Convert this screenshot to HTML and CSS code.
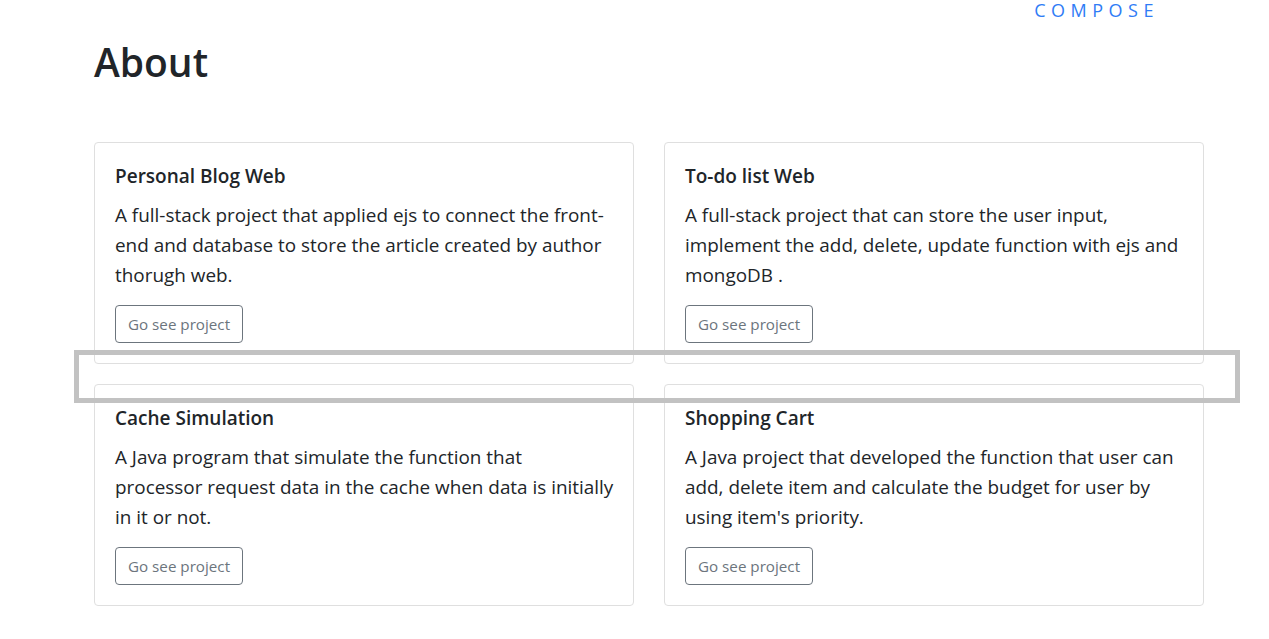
FILE: index.html
```html
<!DOCTYPE html>
<html>
<head>
<meta charset="utf-8">
<link rel="stylesheet" href="styles.css">
</head>
<body>
<header class="topbar">
  <a class="nav-link" href="#">COMPOSE</a>
</header>
<main class="container">
  <h1 class="page-title">About</h1>
  <div class="grid">
    <div class="card">
      <h5 class="card-title">Personal Blog Web</h5>
      <p class="card-text">A full-stack project that applied ejs to connect the front-<br>end and database to store the article created by author<br>thorugh web.</p>
      <a class="btn" href="#">Go see project</a>
    </div>
    <div class="card">
      <h5 class="card-title">To-do list Web</h5>
      <p class="card-text">A full-stack project that can store the user input,<br>implement the add, delete, update function with ejs and<br>mongoDB .</p>
      <a class="btn" href="#">Go see project</a>
    </div>
    <div class="card">
      <h5 class="card-title">Cache Simulation</h5>
      <p class="card-text">A Java program that simulate the function that<br>processor request data in the cache when data is initially<br>in it or not.</p>
      <a class="btn" href="#">Go see project</a>
    </div>
    <div class="card">
      <h5 class="card-title">Shopping Cart</h5>
      <p class="card-text">A Java project that developed the function that user can<br>add, delete item and calculate the budget for user by<br>using item's priority.</p>
      <a class="btn" href="#">Go see project</a>
    </div>
  </div>
</main>
<div class="highlight"></div>
</body>
</html>
```

FILE: styles.css
```css
* { box-sizing: border-box; }
html, body {
  margin: 0;
  padding: 0;
  background: #ffffff;
  font-family: "Open Sans", "Noto Sans", "DejaVu Sans", sans-serif;
  color: #212529;
}
.topbar {
  height: 22px;
  display: flex;
  justify-content: flex-end;
  padding-right: 110px;
  padding-top: 1px;
}
.nav-link {
  color: #2f7cf6;
  text-decoration: none;
  font-size: 18px;
  letter-spacing: 5.5px;
  line-height: 18px;
}
.container {
  width: 1110px;
  margin-left: 94px;
}
.page-title {
  margin: 16px 0 0 0;
  font-size: 39px;
  font-weight: 600;
  line-height: 48px;
  color: #212529;
}
.grid {
  margin-top: 56px;
  display: grid;
  grid-template-columns: 540px 540px;
  column-gap: 30px;
  row-gap: 20px;
}
.card {
  border: 1px solid #dfdfdf;
  border-radius: 4px;
  padding: 21px 20px 20px 20px;
  height: 222px;
}
.card-title {
  margin: 0 0 12px 0;
  font-size: 19px;
  font-weight: 600;
  line-height: 24px;
}
.card-text {
  margin: 0 -10px 15px 0;
  font-size: 18.9px;
  line-height: 30px;
  color: #212529;
}
.btn {
  display: inline-block;
  border: 1px solid #6c757d;
  border-radius: 4px;
  color: #6c757d;
  text-decoration: none;
  font-size: 15.2px;
  line-height: 22px;
  padding: 7px 12px;
  height: 38px;
}
.highlight {
  position: absolute;
  left: 74px;
  top: 350px;
  width: 1166px;
  height: 53px;
  border: 5px solid #c2c2c2;
  pointer-events: none;
}
```
